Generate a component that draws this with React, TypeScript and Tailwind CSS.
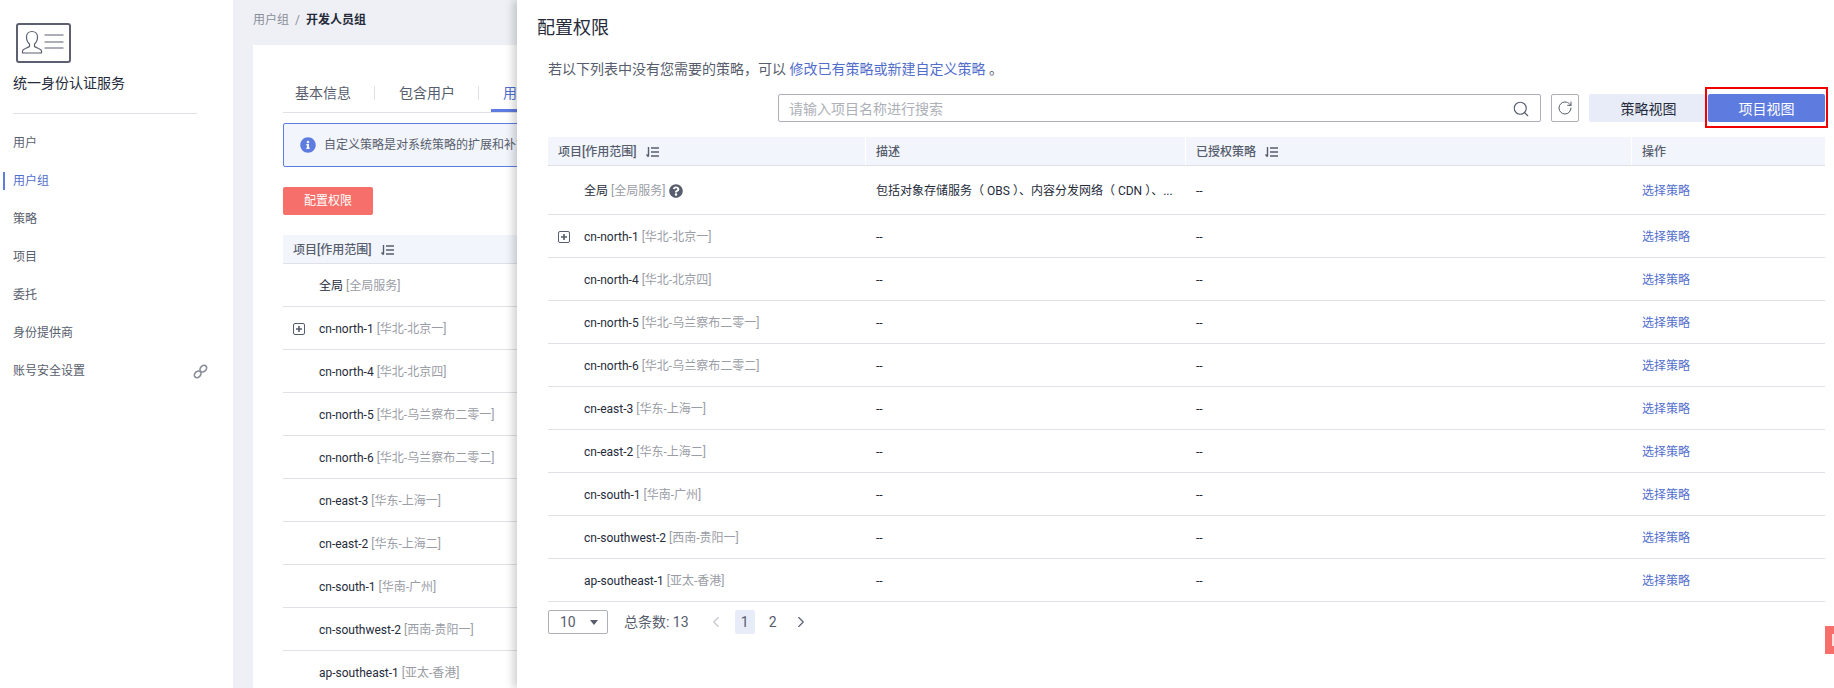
import { ChevronLeft, ChevronRight, RotateCw, Search } from "lucide-react";
import { FaInfoCircle, FaQuestionCircle } from "react-icons/fa";

const navItems = ["用户", "用户组", "策略", "项目", "委托", "身份提供商", "账号安全设置"];

const regions = [
  ["cn-north-1", "华北-北京一"],
  ["cn-north-4", "华北-北京四"],
  ["cn-north-5", "华北-乌兰察布二零一"],
  ["cn-north-6", "华北-乌兰察布二零二"],
  ["cn-east-3", "华东-上海一"],
  ["cn-east-2", "华东-上海二"],
  ["cn-south-1", "华南-广州"],
  ["cn-southwest-2", "西南-贵阳一"],
  ["ap-southeast-1", "亚太-香港"]
];

function SortIcon() {
  return (
    <svg viewBox="0 0 15 12" className="ml-2 h-3 w-[15px]" fill="none" stroke="#575d6c" strokeWidth="1.4">
      <path d="M3.5 1v9.5M1.500 8.500l2 2.200M6 2h8M6 6h8M6 10h8" />
    </svg>
  );
}

function PlusBox() {
  return (
    <svg viewBox="0 0 12 12" className="h-3 w-3 shrink-0" fill="none" stroke="#575d6c">
      <rect x="0.5" y="0.5" width="11" height="11" rx="1.5" />
      <path d="M3 6h6M6 3v6" strokeWidth="1.6" />
    </svg>
  );
}

function IdentityLogo() {
  return (
    <svg viewBox="0 0 55 40" className="h-10 w-[55px]" fill="none" stroke="#5c6070">
      <rect x="1" y="1" width="53" height="38" rx="2" strokeWidth="2" />
      <path d="M6.500 30v-2c0-2 5-3 7-4.500v-2.500c-2-1.500-3-4-3-7 0-3.500 2.500-5.500 5.500-5.500s5.500 2 5.500 5.500c0 3-1 5.500-3 7v2.500c2 1.500 7 2.500 7 4.500v2z" strokeWidth="1.2" />
      <path d="M28.500 12h19M28.500 19h19M28.500 25h19" strokeWidth="1.2" />
    </svg>
  );
}

function LinkIcon() {
  return (
    <svg viewBox="0 0 16 16" className="h-[15px] w-[15px]" fill="none" stroke="#8a8e99" strokeWidth="1.8">
      <ellipse cx="11" cy="5" rx="4" ry="3" transform="rotate(-45 11 5)" />
      <ellipse cx="5" cy="11" rx="4" ry="3" transform="rotate(-45 5 11)" />
    </svg>
  );
}

function Region({ code, name }: { code: string; name: string }) {
  return (
    <span className="whitespace-nowrap">
      <span className="text-[#252b3a]">{code}</span>{" "}
      <span className="text-[#9a9da6]">[{name}]</span>
    </span>
  );
}

function BackTable() {
  return (
    <div>
      <div className="flex h-[29px] items-center border-b border-[#dfe1e6] bg-[#f2f5fc] pl-[10px] pt-[2px] text-xs font-medium text-[#575d6c]">
        项目[作用范围]
        <SortIcon />
      </div>
      <div className="flex h-[43px] items-center border-b border-[#dfe1e6] pl-[36px] pt-[1px] text-xs">
        <Region code="全局" name="全局服务" />
      </div>
      {regions.map(([code, name], index) => (
        <div key={code} className="flex h-[43px] items-center border-b border-[#dfe1e6] pl-[10px] pt-[1px] text-xs">
          <span className="w-[26px]">{index === 0 ? <PlusBox /> : null}</span>
          <Region code={code} name={name} />
        </div>
      ))}
    </div>
  );
}

function Drawer() {
  return (
    <div className="absolute top-0 right-0 bottom-0 w-[1317px] bg-white pl-[21px] pr-[9px] shadow-[-4px_0_8px_rgba(0,0,0,0.18)]">
      <h2 className="-ml-[1px] pt-[17px] text-[18px] leading-[22px] text-[#252b3a]">配置权限</h2>
      <p className="mt-[20px] ml-[10px] text-sm leading-[20px] text-[#575d6c]">
        若以下列表中没有您需要的策略，可以 <span className="text-[#526ecc]">修改已有策略或新建自定义策略</span> 。
      </p>
      <div className="mt-[15px] ml-[240px] flex h-[28px] items-center">
        <div className="flex h-full w-[763px] items-center justify-between rounded-[2px] border border-[#adb0b8] px-[10px] pt-[1px] text-sm text-[#adb0b8]">
          请输入项目名称进行搜索
          <Search className="h-[18px] w-[18px] text-[#575d6c]" strokeWidth={1.5} />
        </div>
        <div className="ml-[10px] flex h-full w-[28px] items-center justify-center rounded-[2px] border border-[#adb0b8]">
          <RotateCw className="h-[16px] w-[16px] text-[#575d6c]" strokeWidth={1.5} />
        </div>
        <div className="ml-[10px] flex h-full w-[119px] items-center justify-center rounded-l-[2px] bg-[#e8ecf8] pt-[1px] text-sm text-[#252b3a]">
          策略视图
        </div>
        <div className="relative flex h-full w-[117px] items-center justify-center rounded-[2px] bg-[#5e7ce0] pt-[1px] text-sm text-white">
          项目视图
          <div className="absolute -top-[7px] -right-[3px] -bottom-[6px] -left-[3px] border-[2px] border-[#f00000]" />
        </div>
      </div>
      <div className="ml-[10px] mt-[15px] w-[1277px]">
        <div className="grid h-[29px] grid-cols-[318px_320px_446px_193px] border-b border-[#dfe1e6] bg-[#f2f5fc] text-xs font-medium text-[#575d6c]">
          <div className="flex items-center border-r border-white pl-[10px] pt-[2px]">
            项目[作用范围]
            <SortIcon />
          </div>
          <div className="flex items-center border-r border-white pl-[10px] pt-[2px]">描述</div>
          <div className="flex items-center border-r border-white pl-[10px] pt-[2px]">
            已授权策略
            <SortIcon />
          </div>
          <div className="flex items-center pl-[10px] pt-[2px]">操作</div>
        </div>
        <div className="grid h-[49px] grid-cols-[318px_320px_446px_193px] items-center border-b border-[#dfe1e6] pt-[2px] text-xs">
          <div className="flex items-center pl-[36px]">
            <Region code="全局" name="全局服务" />
            <FaQuestionCircle className="ml-1 h-[14px] w-[14px] text-[#575d6c]" />
          </div>
          <div className="truncate pl-[10px] text-[#252b3a]">
            包括对象存储服务（<span className="mx-[3px]">OBS</span>）、内容分发网络（<span className="mx-[3px]">CDN</span>）、...
          </div>
          <div className="pl-[10px] text-[#252b3a]">--</div>
          <div className="pl-[10px] text-[#526ecc]">选择策略</div>
        </div>
        {regions.map(([code, name], index) => (
          <div
            key={code}
            className="grid h-[43px] grid-cols-[318px_320px_446px_193px] items-center border-b border-[#dfe1e6] pt-[1px] text-xs"
          >
            <div className="flex items-center pl-[10px]">
              <span className="w-[26px]">{index === 0 ? <PlusBox /> : null}</span>
              <Region code={code} name={name} />
            </div>
            <div className="pl-[10px] text-[#252b3a]">--</div>
            <div className="pl-[10px] text-[#252b3a]">--</div>
            <div className="pl-[10px] text-[#526ecc]">选择策略</div>
          </div>
        ))}
        <div className="mt-[8px] flex h-[24px] items-center text-sm text-[#575d6c]">
          <div className="flex h-full w-[60px] items-center justify-between rounded-[2px] border border-[#adb0b8] pl-[11px] pr-[9px]">
            10
            <svg viewBox="0 0 8 5" className="h-[5px] w-[8px]" fill="#575d6c">
              <path d="M0 0h8L4 5z" />
            </svg>
          </div>
          <span className="ml-[16px]">总条数: 13</span>
          <ChevronLeft className="ml-[18px] h-[18px] w-[18px] text-[#c4c6cc]" strokeWidth={1.5} />
          <span className="ml-[10px] flex h-full w-[20px] items-center justify-center rounded-[2px] bg-[#e8ecf8]">1</span>
          <span className="ml-[8px] flex h-full w-[20px] items-center justify-center">2</span>
          <ChevronRight className="ml-[9px] h-[18px] w-[18px]" strokeWidth={1.5} />
        </div>
      </div>
      <div className="absolute top-[626px] right-0 flex h-[28px] w-[9px] items-center bg-[#f66f6a] pl-[7px]">
        <div className="h-[12px] w-[2px] bg-[#fde2e0]" />
      </div>
    </div>
  );
}

export default function App() {
  return (
    <div
      className="relative flex h-[688px] overflow-hidden bg-[#eef0f5]"
      style={{ fontFamily: 'Roboto, "Noto Sans CJK SC", sans-serif' }}
    >
      <aside className="w-[233px] shrink-0 bg-white">
        <div className="ml-[16px] pt-[23px]">
          <IdentityLogo />
        </div>
        <div className="ml-[13px] mt-[10px] text-sm leading-[20px] text-[#252b3a]">统一身份认证服务</div>
        <div className="ml-[13px] mt-[20px] h-px w-[184px] bg-[#dfe1e6]" />
        <nav className="mt-[10px]">
          {navItems.map((item) => (
            <div
              key={item}
              className={
                item === "用户组"
                  ? "flex h-[38px] items-center justify-between pl-[13px] text-xs text-[#526ecc]"
                  : "flex h-[38px] items-center justify-between pl-[13px] text-xs text-[#575d6c]"
              }
            >
              <span className="relative">
                {item}
                {item === "用户组" ? (
                  <span className="absolute top-[-1px] -left-[10px] h-[18px] w-[2px] bg-[#5e7ce0]" />
                ) : null}
              </span>
              {item === "账号安全设置" ? (
                <span className="mr-[25px]">
                  <LinkIcon />
                </span>
              ) : null}
            </div>
          ))}
        </nav>
      </aside>
      <main className="flex-1 px-[20px]">
        <div className="flex h-[45px] items-start pt-[11px] text-xs leading-[18px]">
          <span className="text-[#8a8e99]">用户组</span>
          <span className="mx-[6px] text-[#8a8e99]">/</span>
          <span className="font-semibold text-[#252b3a]">开发人员组</span>
        </div>
        <div className="h-[643px] overflow-hidden bg-white px-[30px]">
          <div className="flex h-[68px] items-end border-b border-[#dfe1e6] text-sm text-[#575d6c]">
            <div className="flex h-[38px] w-[91px] items-start pl-[12px] pt-[9px]">基本信息</div>
            <div className="mb-[12px] h-[14px] w-px bg-[#dfe1e6]" />
            <div className="flex h-[38px] w-[103px] items-start pl-[24px] pt-[9px]">包含用户</div>
            <div className="mb-[12px] h-[14px] w-px bg-[#dfe1e6]" />
            <div className="ml-[12px] flex h-[38px] w-[120px] items-start border-b-[3px] border-[#5e7ce0] pl-[12px] pt-[9px] text-[#526ecc]">
              用户组权限
            </div>
          </div>
          <div className="mt-[10px] flex h-[44px] items-center rounded-[2px] border border-[#5e7ce0] bg-[#f2f5fc] pl-[16px] text-xs text-[#575d6c]">
            <FaInfoCircle className="mr-[8px] h-4 w-4 text-[#5e7ce0]" />
            自定义策略是对系统策略的扩展和补充
          </div>
          <button className="mt-[20px] block h-[28px] w-[90px] rounded-[2px] bg-[#f66f6a] text-xs text-white">配置权限</button>
          <div className="mt-[20px]">
            <BackTable />
          </div>
        </div>
      </main>
      <Drawer />
    </div>
  );
}
